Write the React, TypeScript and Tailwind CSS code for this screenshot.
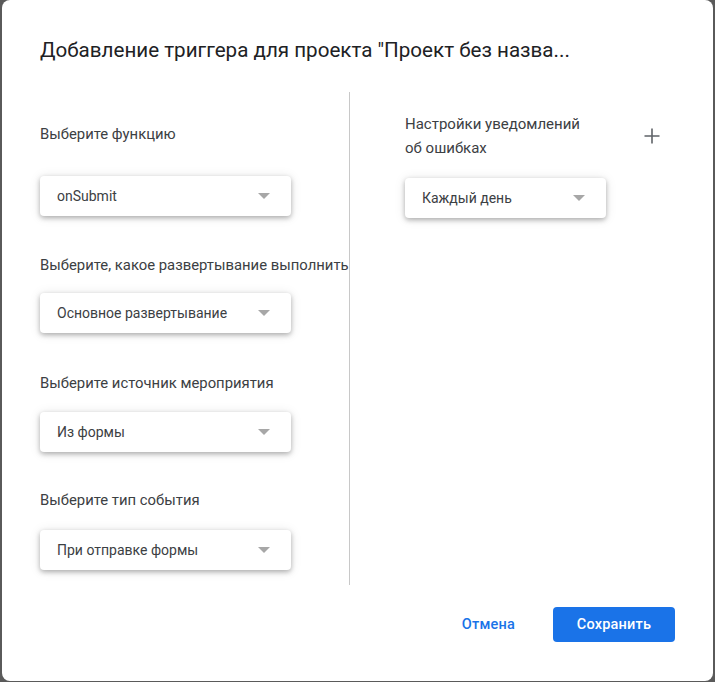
import React from "react";

type SelectProps = { value: string; width: string };

function Select({ value, width }: SelectProps) {
  return (
    <div
      className={`${width} h-[40px] flex items-center justify-between pl-[17px] pr-[21px] bg-white rounded-[4px] shadow-[0_2px_5px_rgba(0,0,0,0.28),0_1px_12px_rgba(0,0,0,0.1)] text-[14px] text-[#3c4043]`}
    >
      <span>{value}</span>
      <span className="w-0 h-0 border-l-[6px] border-r-[6px] border-t-[6px] border-l-transparent border-r-transparent border-t-[#a7a7a7]" />
    </div>
  );
}

function Label({ children }: { children: React.ReactNode }) {
  return <div className="text-[14.85px] leading-[20px] text-[#3c4043] whitespace-nowrap">{children}</div>;
}

export default function App() {
  return (
    <div
      className="w-[715px] h-[682px] bg-[#5a5a5a] px-[2px] pb-[1px]"
      style={{ fontFamily: "Roboto, 'Noto Sans', sans-serif" }}
    >
      <div className="h-full bg-white rounded-[8px] flex flex-col">
        <div className="pl-[38px] pt-[37px] h-[92px] text-[20.6px] leading-[26px] text-[#202124] whitespace-nowrap">
          Добавление триггера для проекта "Проект без назва...
        </div>

        <div className="flex h-[493px]">
          <div className="w-[347px] pl-[38px] pt-[32px] flex flex-col">
            <Label>Выберите функцию</Label>
            <div className="mt-[32px]">
              <Select value="onSubmit" width="w-[251px]" />
            </div>
            <div className="mt-[39px]">
              <Label>Выберите, какое развертывание выполнить</Label>
            </div>
            <div className="mt-[18px]">
              <Select value="Основное развертывание" width="w-[251px]" />
            </div>
            <div className="mt-[40px]">
              <Label>Выберите источник мероприятия</Label>
            </div>
            <div className="mt-[19px]">
              <Select value="Из формы" width="w-[251px]" />
            </div>
            <div className="mt-[38px]">
              <Label>Выберите тип события</Label>
            </div>
            <div className="mt-[20px]">
              <Select value="При отправке формы" width="w-[251px]" />
            </div>
          </div>

          <div className="w-px bg-[#c8c8c8]" />

          <div className="flex-1 pl-[55px] pr-[53px] pt-[20px] flex flex-col">
            <div className="flex items-center justify-between">
              <div className="text-[15px] leading-[24px] text-[#3c4043]">
                Настройки уведомлений
                <br />
                об ошибках
              </div>
              <svg width="16" height="16" viewBox="0 0 16 16" className="text-[#5f6368]">
                <path d="M8 0.5v15M0.5 8h15" stroke="currentColor" strokeWidth="1.6" fill="none" />
              </svg>
            </div>
            <div className="mt-[18px]">
              <Select value="Каждый день" width="w-[201px]" />
            </div>
          </div>
        </div>

        <div className="flex justify-end items-center gap-[22px] pr-[38px] pt-[22px]">
          <button className="h-[35px] px-[16px] text-[14.5px] font-medium text-[#1a73e8] tracking-[0.2px]">
            Отмена
          </button>
          <button className="h-[35px] w-[122px] rounded-[4px] bg-[#1a73e8] text-white text-[14.5px] font-medium tracking-[0.2px]">
            Сохранить
          </button>
        </div>
      </div>
    </div>
  );
}
